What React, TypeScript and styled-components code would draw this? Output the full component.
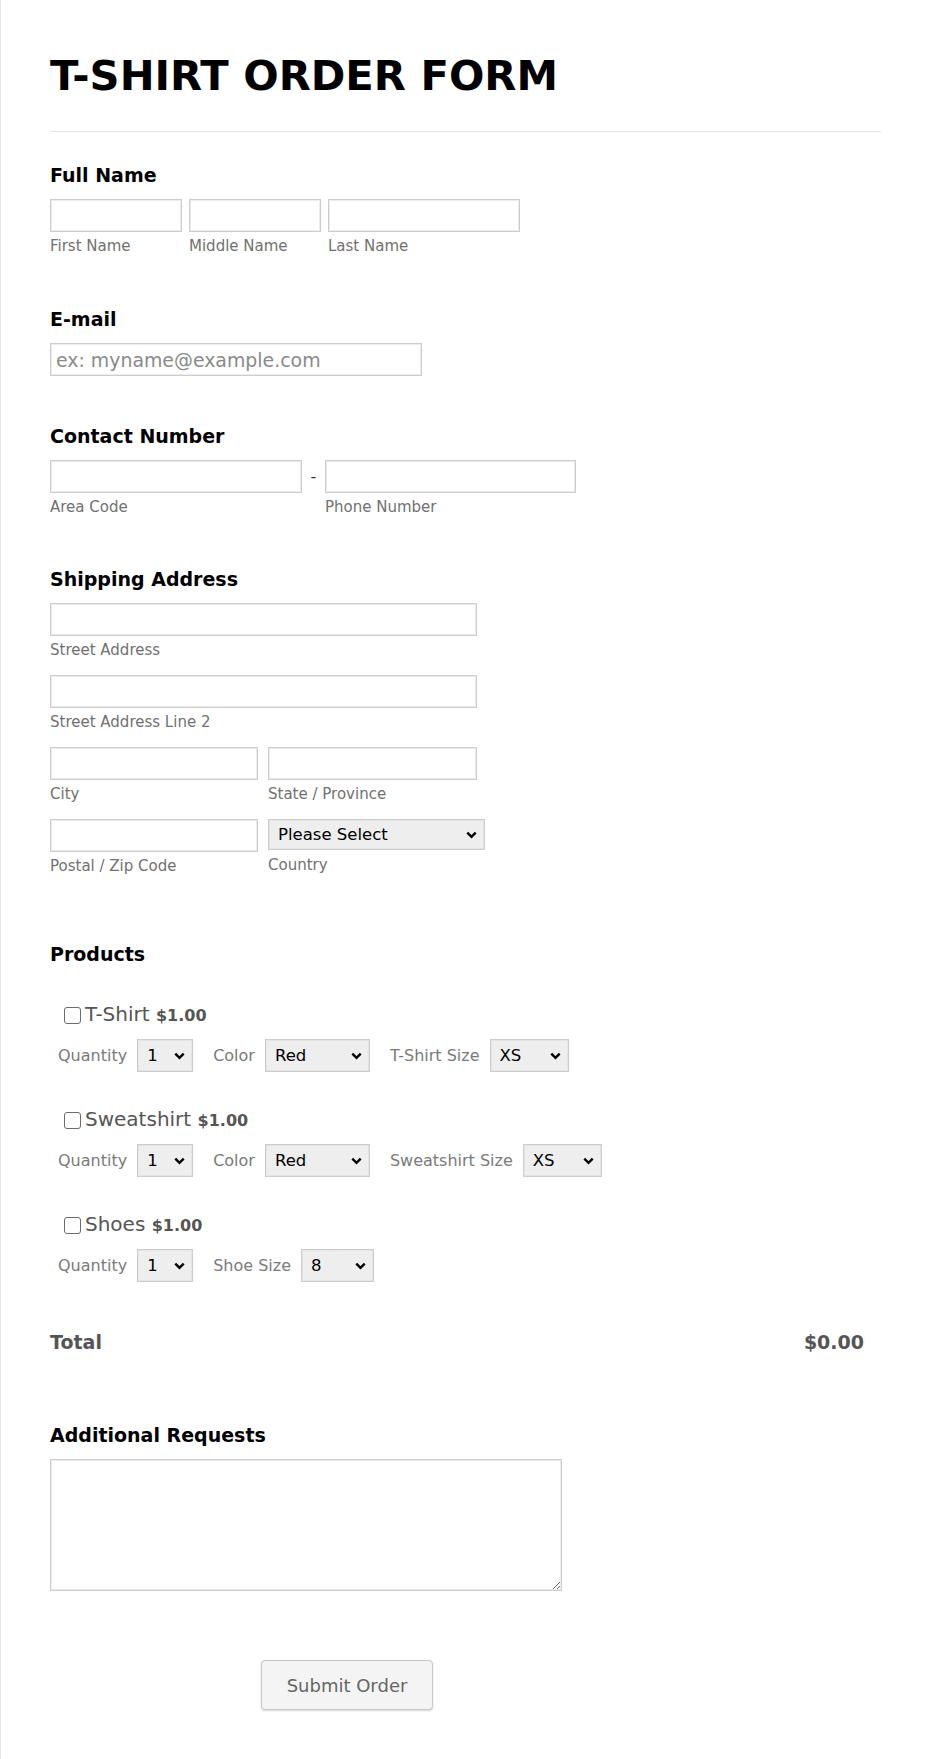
import styled, { createGlobalStyle } from "styled-components"

const GlobalStyle = createGlobalStyle`
  * {
    box-sizing: border-box;
  }
  body {
    margin: 0;
    background: #fff;
    font-family: "DejaVu Sans", Verdana, sans-serif;
  }
`

const products = [
  {
    name: "T-Shirt",
    options: [
      { label: "Quantity", value: "1", width: 56 },
      { label: "Color", value: "Red", width: 105 },
      { label: "T-Shirt Size", value: "XS", width: 79 },
    ],
  },
  {
    name: "Sweatshirt",
    options: [
      { label: "Quantity", value: "1", width: 56 },
      { label: "Color", value: "Red", width: 105 },
      { label: "Sweatshirt Size", value: "XS", width: 79 },
    ],
  },
  {
    name: "Shoes",
    options: [
      { label: "Quantity", value: "1", width: 56 },
      { label: "Shoe Size", value: "8", width: 73 },
    ],
  },
]

const Chevron = () => (
  <Arrow width="11" height="8" viewBox="0 0 11 8" aria-hidden="true">
    <path d="M1.3 1.6 L5.5 5.8 L9.7 1.6" fill="none" stroke="#000" strokeWidth="2.4" />
  </Arrow>
)

type DropdownProps = { w: number; h: number; value: string; label: string }

const Dropdown = ({ w, h, value, label }: DropdownProps) => (
  <SelectBox>
    <Select $w={w} $h={h} defaultValue={value}>
      <option value={value}>{label}</option>
    </Select>
    <Chevron />
  </SelectBox>
)

const App = () => (
  <>
    <GlobalStyle />
    <Page>
      <Header>
        <Title>T-SHIRT ORDER FORM</Title>
      </Header>

      <Section $top={32}>
        <Label>Full Name</Label>
        <Row $gap={7}>
          <SubField>
            <TextInput $w={132} />
            <SubLabel>First Name</SubLabel>
          </SubField>
          <SubField>
            <TextInput $w={132} />
            <SubLabel>Middle Name</SubLabel>
          </SubField>
          <SubField>
            <TextInput $w={192} />
            <SubLabel>Last Name</SubLabel>
          </SubField>
        </Row>
      </Section>

      <Section $top={53}>
        <Label>E-mail</Label>
        <TextInput $w={372} placeholder="ex: myname@example.com" />
      </Section>

      <Section $top={49}>
        <Label>Contact Number</Label>
        <Row $gap={0}>
          <SubField>
            <TextInput $w={252} />
            <SubLabel>Area Code</SubLabel>
          </SubField>
          <Dash>-</Dash>
          <SubField>
            <TextInput $w={251} />
            <SubLabel>Phone Number</SubLabel>
          </SubField>
        </Row>
      </Section>

      <Section $top={52}>
        <Label>Shipping Address</Label>
        <AddressGrid>
          <SubField $wide>
            <TextInput $w={427} />
            <SubLabel>Street Address</SubLabel>
          </SubField>
          <SubField $wide>
            <TextInput $w={427} />
            <SubLabel>Street Address Line 2</SubLabel>
          </SubField>
          <SubField>
            <TextInput $w={208} />
            <SubLabel>City</SubLabel>
          </SubField>
          <SubField>
            <TextInput $w={209} />
            <SubLabel>State / Province</SubLabel>
          </SubField>
          <SubField>
            <TextInput $w={208} />
            <SubLabel>Postal / Zip Code</SubLabel>
          </SubField>
          <SubField>
            <Dropdown w={217} h={31} value="" label="Please Select" />
            <SubLabel $top={6}>Country</SubLabel>
          </SubField>
        </AddressGrid>
      </Section>

      <Section $top={68}>
        <Label>Products</Label>
        <ProductList>
          {products.map((p) => (
            <Product key={p.name}>
              <ProductHead>
                <Check type="checkbox" />
                <ProductName>
                  {p.name} <Price>$1.00</Price>
                </ProductName>
              </ProductHead>
              <OptionRow>
                {p.options.map((o) => (
                  <OptionGroup key={o.label}>
                    <OptionLabel>{o.label}</OptionLabel>
                    <Dropdown w={o.width} h={33} value={o.value} label={o.value} />
                  </OptionGroup>
                ))}
              </OptionRow>
            </Product>
          ))}
        </ProductList>
        <TotalRow>
          <span>Total</span>
          <span>$0.00</span>
        </TotalRow>
      </Section>

      <Section $top={70}>
        <Label>Additional Requests</Label>
        <TextArea />
      </Section>

      <ButtonBar>
        <SubmitButton type="button">Submit Order</SubmitButton>
      </ButtonBar>
    </Page>
  </>
)

// Styled components
const Page = styled.div`
  width: 930px;
  min-height: 1759px;
  border-left: 1px solid #e3e3e3;
  padding: 0 49px 0 49px;
`

const Header = styled.div`
  padding: 52px 0 31px;
  border-bottom: 1px solid #e6e6e6;
`

const Title = styled.h1`
  margin: 0;
  font-size: 41.7px;
  line-height: 48px;
  font-weight: 700;
  color: #000;
`

const Section = styled.div<{ $top: number }>`
  margin-top: ${(p) => p.$top}px;
`

const Label = styled.div`
  font-size: 19px;
  line-height: 23px;
  font-weight: 700;
  color: #000;
  margin-bottom: 12px;
`

const Row = styled.div<{ $gap: number }>`
  display: flex;
  align-items: flex-start;
  gap: ${(p) => p.$gap}px;
`

const SubField = styled.div<{ $wide?: boolean }>`
  display: flex;
  flex-direction: column;
  align-items: flex-start;
  grid-column: ${(p) => (p.$wide ? "1 / span 2" : "auto")};
`

const TextInput = styled.input<{ $w: number }>`
  width: ${(p) => p.$w}px;
  height: 33px;
  margin: 0;
  padding: 0 5px;
  border: 1px solid #cdcdcd;
  box-shadow: inset 0 0 0 1px #ececec;
  background: #fff;
  font-family: inherit;
  font-size: 18.9px;
  color: #333;
  outline: none;

  &::placeholder {
    color: #8a8a8a;
  }
`

const SubLabel = styled.span<{ $top?: number }>`
  margin-top: ${(p) => p.$top ?? 5}px;
  font-size: 15px;
  line-height: 18px;
  color: #717171;
`

const Dash = styled.span`
  width: 23px;
  text-align: center;
  font-size: 16px;
  line-height: 33px;
  color: #333;
`

const AddressGrid = styled.div`
  display: grid;
  grid-template-columns: 208px 209px;
  column-gap: 10px;
  row-gap: 16px;
`

const SelectBox = styled.span`
  position: relative;
  display: inline-flex;
`

const Select = styled.select<{ $w: number; $h: number }>`
  appearance: none;
  width: ${(p) => p.$w}px;
  height: ${(p) => p.$h}px;
  margin: 0;
  padding: 0 22px 0 9px;
  border: 1px solid #cdcdcd;
  box-shadow: inset 0 0 0 1px #e4e4e4;
  border-radius: 0;
  background-color: #eeeeee;
  font-family: inherit;
  font-size: 16.5px;
  color: #000;
  outline: none;
`

const Arrow = styled.svg`
  position: absolute;
  right: 8px;
  top: 50%;
  margin-top: -4px;
  pointer-events: none;
`

const ProductList = styled.div`
  display: flex;
  flex-direction: column;
  gap: 36px;
  margin-top: 37px;
`

const Product = styled.div`
  display: flex;
  flex-direction: column;
  gap: 12px;
`

const ProductHead = styled.label`
  display: flex;
  align-items: center;
  height: 24px;
  padding-left: 14px;
`

const Check = styled.input`
  appearance: none;
  width: 17px;
  height: 17px;
  margin: 0 4px 0 0;
  border: 1px solid #6b6b6b;
  border-radius: 3px;
  background: #fff;
`

const ProductName = styled.span`
  font-size: 20px;
  line-height: 24px;
  color: #555;
`

const Price = styled.span`
  font-size: 16px;
  font-weight: 700;
  color: #555;
`

const OptionRow = styled.div`
  display: flex;
  align-items: center;
  gap: 20px;
  padding-left: 8px;
`

const OptionGroup = styled.div`
  display: flex;
  align-items: center;
  gap: 10px;
`

const OptionLabel = styled.span`
  font-size: 16px;
  color: #7a7a7a;
`

const TotalRow = styled.div`
  display: flex;
  justify-content: space-between;
  margin-top: 49px;
  padding-right: 17px;
  font-size: 19px;
  line-height: 23px;
  font-weight: 700;
  color: #555;
`

const TextArea = styled.textarea`
  display: block;
  width: 512px;
  height: 132px;
  margin: 0;
  border: 1px solid #cdcdcd;
  box-shadow: inset 0 0 0 1px #ececec;
  font-family: inherit;
  font-size: 16px;
  outline: none;
`

const ButtonBar = styled.div`
  padding: 69px 0 40px 211px;
`

const SubmitButton = styled.button`
  width: 172px;
  height: 50px;
  border: 1px solid #c8c8c8;
  border-radius: 4px;
  background: #f4f4f4;
  box-shadow: 0 1px 2px rgba(0, 0, 0, 0.18);
  font-family: inherit;
  font-size: 18px;
  color: #666;
`

export default App
